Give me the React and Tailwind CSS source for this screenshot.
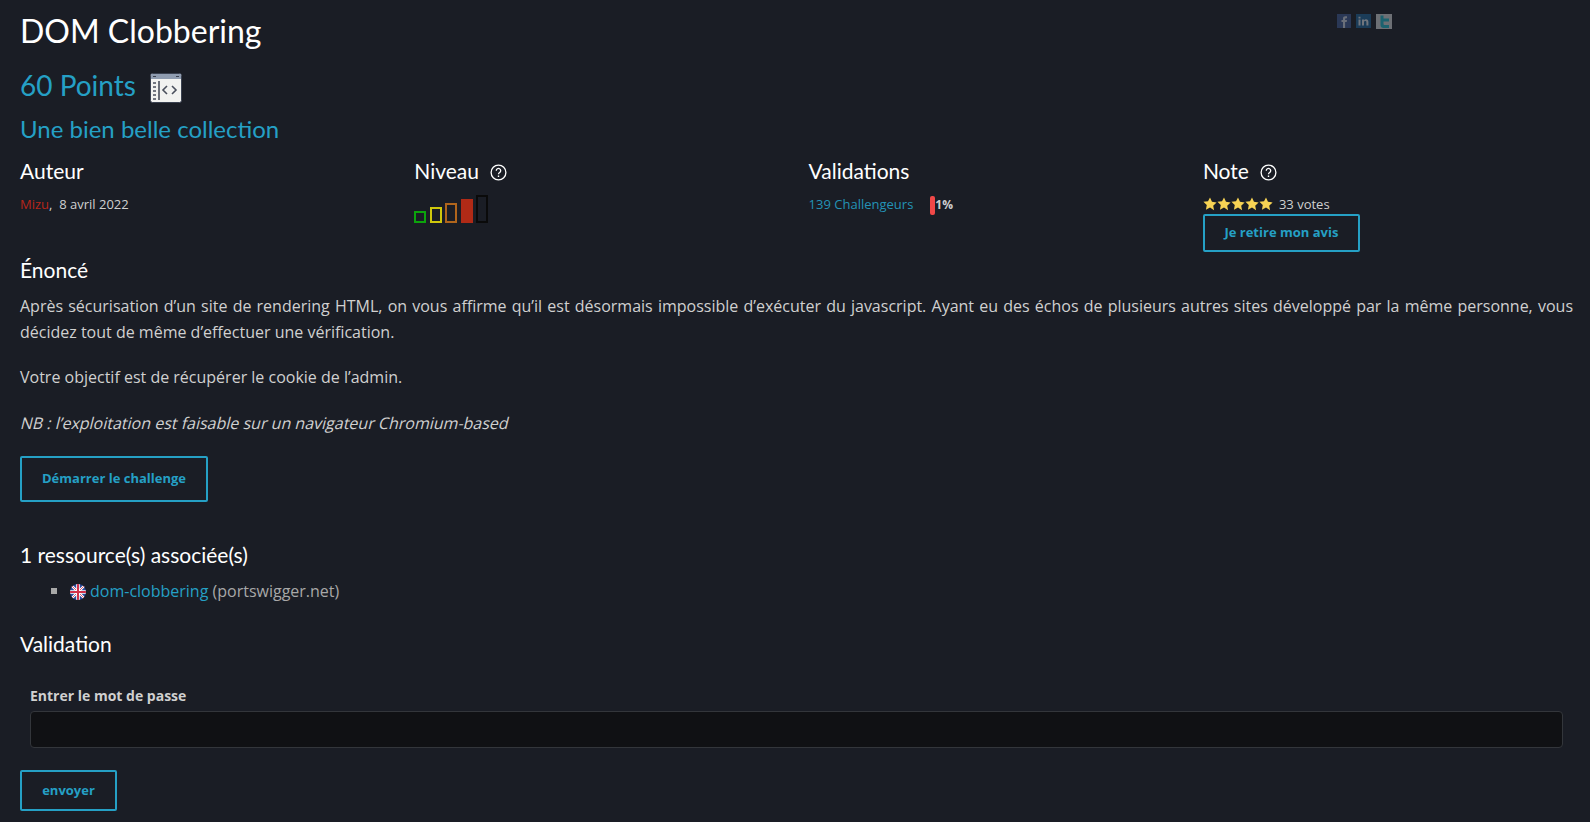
import React from 'react';

const blue = 'text-[#25a0c5]';
const headFont = "[font-family:'Lato','Noto_Sans',sans-serif]";

const HelpIcon = () => (
  <svg width="17" height="17" viewBox="0 0 17 17" className="ml-[11px] mt-[3px]" fill="none">
    <circle cx="8.500" cy="8.500" r="7.400" stroke="#fff" strokeWidth="1.3" />
    <path d="M6.300 6.700a2.200 2.200 0 1 1 3.400 1.800c-.8.500-1.200.9-1.200 1.800" stroke="#fff" strokeWidth="1.3" />
    <rect x="7.800" y="11.500" width="1.400" height="1.500" fill="#fff" />
  </svg>
);

const Star = () => (
  <svg width="14" height="14" viewBox="0 0 24 24" fill="#f7d354">
    <path d="M12 1l3.400 7.300 7.900 1-5.800 5.500 1.500 7.900L12 18l-7 3.700 1.500-7.900L.7 8.300l7.900-1z" />
  </svg>
);

const LevelBars = () => (
  <div className="flex items-end gap-[3.5px] h-[28px] mt-[11px]">
    <div className="w-3 h-3 border-2 border-[#0ca30c]" />
    <div className="w-3 h-4 border-2 border-[#cfc70c]" />
    <div className="w-3 h-5 border-2 border-[#b0651c]" />
    <div className="w-3 h-6 bg-[#b02a16]" />
    <div className="w-3 h-7 border-2 border-[#0a0a0a]" />
  </div>
);

const ChallengeIcon = () => (
  <svg width="32" height="30" viewBox="0 0 32 30" className="ml-[14px] mt-[6px]">
    <rect x="0.5" y="0.5" width="31" height="29" rx="2" fill="#f2f2f0" stroke="#3a4150" />
    <rect x="1" y="1" width="30" height="5" fill="#8f9cb0" />
    <path d="M3 3.500h3M26 3.500h3" stroke="#3a4150" strokeWidth="1" />
    <path d="M3 10h3M3 14h3M3 18h3M3 22h3M3 26h3" stroke="#4a4f5c" strokeWidth="1.4" />
    <path d="M9 8v19" stroke="#3f4553" strokeWidth="1.5" />
    <path d="M17 13l-4 4 4 4M22 13l4 4-4 4" stroke="#4a4f5c" strokeWidth="1.6" fill="none" />
  </svg>
);

const Flag = () => (
  <svg width="16" height="16" viewBox="0 0 16 16" className="inline-block mr-[4px] align-[-3px]">
    <clipPath id="flagClip"><circle cx="8" cy="8" r="8" /></clipPath>
    <g clipPath="url(#flagClip)">
      <rect width="16" height="16" fill="#2b4a9b" />
      <path d="M0 0l16 16M16 0L0 16" stroke="#fff" strokeWidth="2.4" />
      <path d="M0 0l16 16M16 0L0 16" stroke="#d2304a" strokeWidth="0.8" />
      <path d="M8 0v16M0 8h16" stroke="#fff" strokeWidth="3.6" />
      <path d="M8 0v16M0 8h16" stroke="#d2304a" strokeWidth="2" />
    </g>
  </svg>
);

const Share = () => (
  <div className="absolute left-[1337px] top-[14px] flex gap-[5px] opacity-50">
    <svg width="14" height="14" viewBox="0 0 14 14">
      <rect width="14" height="14" fill="#3b5488" />
      <path d="M6 14V8H4.500V6H6V4.500C6 3 7 2.200 8.300 2.200H10v2H9c-.6 0-.9.3-.9.8V6H10l-.3 2H8.100v6z" fill="#b9c0cc" />
    </svg>
    <svg width="15" height="14" viewBox="0 0 15 14">
      <rect width="15" height="14" fill="#1c5c8c" />
      <path d="M2.500 5.500h2v6h-2zM2.500 2.800h2v1.700h-2zM6 5.500h2v.9c.5-.7 1.100-1.100 2-1.100 1.600 0 2.400 1 2.400 2.800v3.400h-2V8.500c0-.9-.3-1.400-1.100-1.400S8 7.600 8 8.500v3H6z" fill="#c5ccd4" />
    </svg>
    <svg width="16" height="15" viewBox="0 0 16 15">
      <rect width="16" height="15" fill="#bfc2c4" />
      <path d="M4.500 1.500h3v3H13v3H7.500v2.300c0 .8.400 1.200 1.200 1.200H13v3H7.500C5.500 14 4.500 12.800 4.500 11z" fill="#1fa6b8" />
    </svg>
  </div>
);

const OutlineButton = ({ className, children }) => (
  <button className={`block border-2 border-[#25a0c5] rounded-[2px] ${blue} text-[13px] font-bold ${className}`}>
    {children}
  </button>
);

export default function App() {
  return (
    <div className="relative min-h-[822px] bg-[#1a1d25] text-[#d0d0d0] pl-5 pr-[17px] overflow-hidden [font-family:'Open_Sans',sans-serif] text-[16px]">
      <Share />
      <h1 className={`${headFont} text-white text-[32px] leading-[42px] pt-[10px]`}>DOM Clobbering</h1>

      <div className="flex items-center mt-[16px] h-[34px]">
        <h2 className={`${headFont} ${blue} text-[28px] leading-[34px]`}>60 Points</h2>
        <ChallengeIcon />
      </div>
      <h3 className={`${headFont} ${blue} text-[24px] leading-[30px] mt-[12px]`}>Une bien belle collection</h3>

      <div className="grid grid-cols-[394.300px_394.300px_394.300px_1fr] mt-[14px] h-[95px]">
        <div>
          <h4 className={`${headFont} text-white text-[21px] leading-[26px]`}>Auteur</h4>
          <p className="text-[13px] leading-[18px] mt-[11px]">
            <span className="text-[#b8261a]">Mizu</span>,&nbsp; 8 avril 2022
          </p>
        </div>
        <div>
          <h4 className={`${headFont} text-white text-[21px] leading-[26px] flex items-center`}>Niveau <HelpIcon /></h4>
          <LevelBars />
        </div>
        <div>
          <h4 className={`${headFont} text-white text-[21px] leading-[26px]`}>Validations</h4>
          <div className="flex items-center text-[13px] leading-[18px] mt-[11px]">
            <span className={`${blue} opacity-90 pb-[2px]`}>139 Challengeurs</span>
            <span className="ml-[17px] w-[5px] h-[19px] rounded-[2px] bg-[#f04848]" />
            <span className="font-bold text-[12px]">1%</span>
          </div>
        </div>
        <div>
          <h4 className={`${headFont} text-white text-[21px] leading-[26px] flex items-center`}>Note <HelpIcon /></h4>
          <div className="flex items-center text-[13px] leading-[18px] mt-[11px]">
            <Star /><Star /><Star /><Star /><Star />
            <span className="ml-[6px]">33 votes</span>
          </div>
          <OutlineButton className="w-[157px] h-[38px] mt-[1px]">Je retire mon avis</OutlineButton>
        </div>
      </div>

      <h4 className={`${headFont} text-white text-[21px] leading-[26px] mt-[4px]`}>Énoncé</h4>
      <p className="leading-[26px] mt-[10px] text-justify">
        Après sécurisation d’un site de rendering HTML, on vous affirme qu’il est désormais impossible d’exécuter du javascript. Ayant eu des échos de plusieurs autres sites développé par la même personne, vous décidez tout de même d’effectuer une vérification.
      </p>
      <p className="leading-[26px] mt-[19px]">Votre objectif est de récupérer le cookie de l’admin.</p>
      <p className="leading-[26px] mt-[20px]"><span className="inline-block origin-bottom-left skew-x-[-14deg] -ml-[2px]">NB : l’exploitation est faisable sur un navigateur Chromium-based</span></p>

      <OutlineButton className="w-[188px] h-[46px] mt-[20px]">Démarrer le challenge</OutlineButton>

      <h4 className={`${headFont} text-white text-[21px] leading-[26px] mt-[40px]`}>1 ressource(s) associée(s)</h4>
      <ul className="mt-[10px] ml-[31px] leading-[26px]">
        <li className="flex items-center">
          <span className="w-[6px] h-[6px] bg-[#a8a8a8] mr-[13px]" />
          <span className="text-[#a8a8a8]"><Flag /><a className={blue}>dom-clobbering</a> (portswigger.net)</span>
        </li>
      </ul>

      <h4 className={`${headFont} text-white text-[21px] leading-[26px] mt-[27px]`}>Validation</h4>

      <form className="px-[10px] mt-[29px]">
        <label className="block text-[14px] font-bold leading-[20px]">Entrer le mot de passe</label>
        <div className="mt-[5px] h-[37px] bg-[#101114] border border-[#33363b] rounded-[4px]" />
      </form>
      <OutlineButton className="w-[97px] h-[41px] mt-[22px]">envoyer</OutlineButton>
    </div>
  );
}
